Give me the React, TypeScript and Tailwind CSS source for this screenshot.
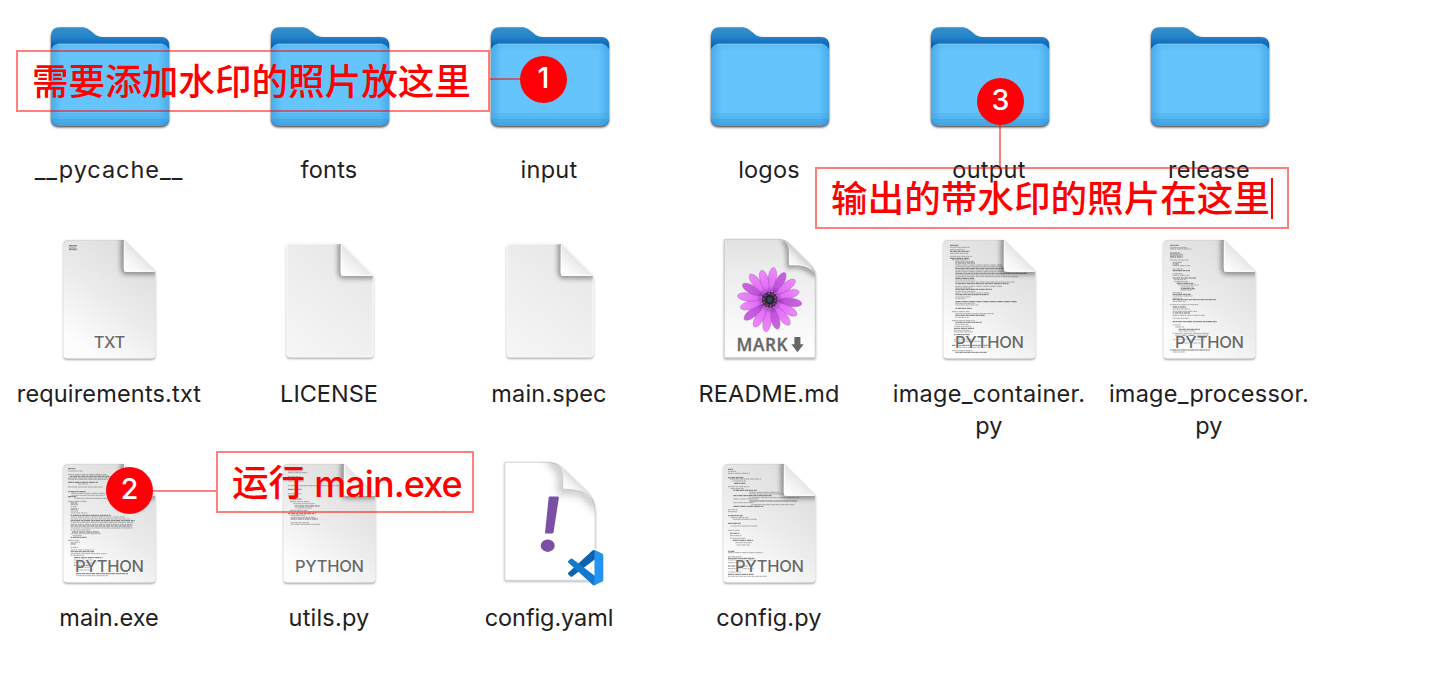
import type { ReactNode } from "react";

type Line = [x: number, y: number, w: number];

/* Miniature source listings, in thirds of a pixel inside the 384-unit icon box. */
const containerCode: Line[] = [
  [72, 28, 25], [72, 34, 58], [72, 41, 44], [72, 46, 60], [72, 52, 54], [72, 61, 66],
  [72, 67, 58], [78, 71, 50], [88, 76, 56], [88, 81, 60], [88, 87, 140], [88, 92, 145], [88, 97, 150], [88, 102, 150],
  [88, 107, 160], [88, 112, 214], [88, 117, 150], [88, 122, 190], [88, 127, 56], [88, 132, 60], [88, 138, 180],
  [88, 143, 160], [88, 151, 140], [88, 156, 50], [88, 160, 110], [88, 166, 62], [88, 171, 105], [88, 176, 100],
  [88, 183, 45], [88, 188, 30], [88, 197, 185], [88, 202, 60], [88, 207, 70], [88, 217, 50],
  [78, 227, 52], [88, 233, 115], [88, 238, 90], [88, 244, 40], [78, 254, 68], [88, 259, 80], [88, 265, 40],
  [84, 271, 52], [84, 277, 60], [84, 283, 50], [84, 288, 56], [84, 296, 48], [84, 310, 60], [84, 316, 90],
  [78, 328, 110], [92, 334, 90], [78, 344, 62], [88, 349, 94],
];
const processorCode: Line[] = [
  [72, 28, 26], [72, 35, 52], [72, 39, 65], [72, 51, 30], [72, 55, 40], [72, 59, 38], [72, 63, 38],
  [72, 72, 55], [80, 79, 30], [80, 84, 18], [80, 89, 52], [80, 99, 32], [80, 104, 52], [80, 113, 30], [80, 118, 50],
  [80, 126, 70], [84, 131, 36], [84, 137, 42], [92, 142, 50], [96, 147, 62], [104, 153, 40], [104, 158, 42],
  [104, 162, 36], [80, 170, 28], [80, 175, 54], [80, 180, 62], [80, 187, 28], [80, 191, 130], [80, 196, 40],
  [72, 206, 85], [80, 213, 40], [80, 219, 52], [80, 226, 74], [80, 231, 52], [80, 238, 96], [80, 247, 50],
  [80, 257, 132], [80, 267, 24], [88, 273, 26], [98, 280, 64], [98, 285, 50], [80, 292, 110], [88, 298, 100],
  [82, 311, 96], [96, 321, 76], [72, 342, 120], [80, 348, 38],
];
const mainCode: Line[] = [
  [66, 26, 22], [66, 33, 44], [66, 44, 116], [72, 49, 130], [66, 54, 130], [66, 58, 120], [66, 67, 90], [96, 72, 32],
  [66, 81, 104], [66, 95, 54], [76, 100, 120], [76, 106, 100], [66, 110, 25], [84, 115, 130], [66, 124, 56],
  [74, 129, 20], [74, 134, 22], [74, 140, 18], [74, 147, 24], [74, 153, 22], [74, 159, 50], [74, 166, 120],
  [74, 171, 164], [74, 177, 180], [74, 182, 192], [74, 187, 188], [74, 193, 186], [74, 198, 184], [74, 204, 185],
  [74, 210, 60], [78, 216, 84], [74, 221, 90], [80, 227, 28], [74, 232, 48], [66, 241, 34], [74, 247, 28],
  [74, 252, 16], [74, 262, 22], [74, 270, 70], [74, 275, 72], [74, 281, 108], [74, 286, 40], [84, 293, 86],
  [84, 300, 56], [84, 308, 68], [84, 316, 46], [90, 322, 40], [90, 330, 50], [90, 341, 156], [90, 347, 95],
];
const utilsCode: Line[] = [
  [66, 28, 34], [66, 33, 40], [66, 38, 58], [66, 51, 38], [66, 63, 48], [66, 77, 224], [66, 88, 40],
  [66, 101, 40], [72, 107, 22], [72, 117, 36], [72, 125, 58], [82, 131, 64], [86, 138, 76], [88, 144, 50], [72, 151, 52],
  [66, 161, 84], [74, 166, 44], [74, 172, 74], [74, 177, 82], [74, 188, 55], [74, 193, 90],
];
const configCode: Line[] = [
  [66, 28, 16], [66, 34, 24], [66, 40, 65], [66, 53, 46], [72, 57, 94], [80, 63, 40], [84, 70, 34],
  [66, 80, 64], [74, 86, 40], [82, 91, 70], [130, 97, 90], [130, 102, 100], [82, 107, 115], [130, 113, 150],
  [82, 117, 74], [130, 123, 145], [82, 128, 62], [136, 134, 130], [82, 139, 90], [66, 149, 28], [66, 155, 30],
  [66, 167, 44], [74, 173, 52], [82, 178, 72], [66, 190, 38], [74, 198, 80], [66, 211, 36], [72, 220, 28],
  [72, 227, 34], [72, 235, 46], [80, 241, 62], [88, 248, 50], [92, 255, 40], [66, 274, 20], [66, 278, 106],
  [66, 290, 40], [66, 295, 80], [66, 300, 90], [66, 308, 46], [66, 318, 60], [66, 326, 78], [66, 336, 40],
  [66, 343, 78], [66, 349, 116],
];
const txtCode: Line[] = [
  [69, 29, 24], [69, 33, 22], [69, 37, 24], [69, 41, 25],
];

const dashes = ["9 1 5 1 12 2", "5 2 11 1 7 1", "14 1 4 2", "7 1 3 1 10 2"];

function Frame({ children }: { children: ReactNode }) {
  return (
    <svg viewBox="0 0 128 128" className="h-32 w-32 shrink-0 overflow-visible">
      {children}
    </svg>
  );
}

function Folder() {
  return (
    <Frame>
      <path filter="url(#folderShadow)" fill="url(#folderBack)" d="M5 27V24Q5 15.3 14 15.3H35C41 15.3 43.5 18 47.5 21.3C50.5 23.8 52.5 25 57 25H115Q123 25 123 33V106Q123 114 115 114H13Q5 114 5 106Z" />
      <rect x="5" y="31.7" width="118" height="82.3" rx="8" fill="url(#folderFront)" />
      <rect x="5" y="31.7" width="118" height="82.3" rx="8" fill="url(#folderSides)" />
      <path d="M11 32.3H117" stroke="#7acbfa" strokeWidth="1" />
      <path d="M5.2 102H123M5.2 104.8H123" stroke="#4dabe4" strokeWidth=".8" />
      <path d="M5.2 107.8H123" stroke="#3b9ddc" strokeWidth=".9" />
    </Frame>
  );
}

function Code({ lines }: { lines: Line[] }) {
  return (
    <g transform="scale(.33333)" stroke="#4d4d4d">
      {lines.map(([x, y, w], i) => (
        <path key={i} d={`M${x} ${y}h${w}`} strokeWidth={i % 3 ? 2.2 : 3} opacity={i % 3 ? 0.6 : 0.75} strokeDasharray={dashes[i % 4]} />
      ))}
    </g>
  );
}

function Doc({ kind, code }: { kind: string; code: Line[] }) {
  return (
    <Frame>
      <path filter="url(#docShadow)" fill="url(#paper)" d="M17.7 7.5Q17.7 4 21 4H78.5L109.2 35V119Q109.2 122.3 106 122.3H21Q17.7 122.3 17.7 119Z" />
      <path d="M18 8Q18 4.4 21 4.4H78" fill="none" stroke="#d2d2d2" strokeWidth=".7" />
      <Code lines={code} />
      <g clipPath="url(#docClip)">
        <path d="M78 2V32Q78 35.5 81 35.5H111" fill="none" stroke="#000" strokeOpacity=".42" strokeWidth="6" filter="url(#soft)" />
      </g>
      <path d="M78 4L109.2 35.7H81Q77.8 35.7 77.8 32.5Z" fill="url(#fold)" />
      <path d="M78.3 5V32.5Q78.3 35.2 81 35.2H108" fill="none" stroke="#fff" strokeWidth="1" />
      <text x="63.5" y="112.3" textAnchor="middle" textLength={kind === "TXT" ? 31.5 : 69} fontFamily="Inter, sans-serif" fontSize="16.5" fontWeight="500" fill="#6a6a6a" stroke="#fff" strokeOpacity=".65" strokeWidth="1.6" paintOrder="stroke">
        {kind}
      </text>
    </Frame>
  );
}

function BlankDoc() {
  return (
    <Frame>
      <path filter="url(#docShadow)" fill="url(#blankPaper)" stroke="#fff" strokeWidth=".9" d="M21.2 10Q21.2 7.9 23.3 7.9H75.5L106.8 39.5V118.5Q106.8 120.8 104.8 120.8H23.3Q21.2 120.8 21.2 118.5Z" />
      <g clipPath="url(#blankClip)">
        <path d="M75 6V36Q75 39.6 78 39.6H109" fill="none" stroke="#000" strokeOpacity=".4" strokeWidth="6" filter="url(#soft)" />
      </g>
      <path d="M75 7.9L106.8 39.7H78Q74.7 39.7 74.7 36.5Z" fill="url(#fold)" />
      <path d="M75.2 9V36.5Q75.2 39.2 78 39.2H106" fill="none" stroke="#fff" strokeWidth="1" />
    </Frame>
  );
}

function MarkdownDoc() {
  return (
    <Frame>
      <path filter="url(#docShadow)" fill="url(#mdPaper)" stroke="#b9b9b9" strokeWidth=".6" d="M18.3 3.3H72C78 3.3 81 5.5 84.5 9L104 28.5C107.5 32 109.2 35 109.2 40V121.7H18.3Z" />
      <g clipPath="url(#mdClip)">
        <path d="M77 3C83 7 83.5 17 83 30C93 28 104 32 110 40" fill="none" stroke="#000" strokeOpacity=".45" strokeWidth="4" filter="url(#soft)" />
      </g>
      <path d="M74 3.6C81 5 83.3 11 83.3 18V29H91C98 29 105 31.5 108.5 37C107.5 33 106 30.5 104 28.5L84.5 9C81 5.5 78 4 74 3.6Z" fill="url(#curl)" />
      <path d="M83.5 14V28.8H91C96 28.8 101 30 105 33" fill="none" stroke="#fff" strokeWidth=".8" />
      <g transform="translate(63.7 63.7)">
        {Array.from({ length: 16 }, (_, i) => (
          <path
            key={i}
            transform={`rotate(${i * 22.5 + 7}) scale(1 ${[1, 0.96, 0.99, 0.94][i % 4]})`}
            d="M0-5C-2.6-11-4.6-19-3.9-25C-3.4-29.8-1.4-32.4 0-32.4S3.4-29.8 3.9-25C4.6-19 2.6-11 0-5Z"
            fill={i % 3 === 1 ? "url(#petalB)" : "url(#petalA)"}
            stroke="#9c45b0"
            strokeWidth=".4"
          />
        ))}
        <circle r="7.8" fill="#35103f" opacity=".8" />
        <circle r="6.3" fill="none" stroke="#d3a22e" strokeWidth="1" strokeDasharray="1.1 2.85" />
        <circle r="4.6" fill="#172331" />
        <circle r="2.6" fill="#344656" />
      </g>
      <text x="30.5" y="114.7" textLength="51" fontFamily="'Open Sans', sans-serif" fontSize="17.2" fontWeight="600" fill="#666" stroke="#666" strokeWidth=".3">MARK</text>
      <path d="M88.4 101H94.4V108.3H97.6L91.5 116.3L85.4 108.3H88.4Z" fill="#666" />
    </Frame>
  );
}

function YamlDoc() {
  return (
    <Frame>
      <path filter="url(#softDocShadow)" fill="#fff" stroke="#c9c9c9" strokeWidth=".8" d="M18.8 2.3H61C69 2.3 73 4.5 78 9.5L99.5 30C106 36.5 109.2 43 109.2 53V120.3H18.8Z" />
      <g clipPath="url(#yamlClip)">
        <path d="M62 0C74 3 78 15 76.5 30C90 27.5 105 34 112 50" fill="none" stroke="#000" strokeOpacity=".26" strokeWidth="8" filter="url(#wideSoft)" />
      </g>
      <path d="M68 3.4C75 6.5 76.7 12 76.7 19V29.3C86 29 97 30 106 39C104 35 102 32.3 99.5 30L78 9.5C75 6.5 72 4.5 68 3.4Z" fill="url(#curlLight)" />
      <path d="M72 5.5C76 9 76.7 14 76.7 19V29.3C86 29 96 30.5 103 35.5" fill="none" stroke="#bdbdbd" strokeWidth=".6" />
      <path d="M62.6 38Q62.7 36.6 64 36.6H71.5Q73 36.6 72.8 38.2L67.6 72Q67.3 73.5 65.8 73.5H59Z" fill="#7b4fa3" />
      <ellipse cx="61.7" cy="85.7" rx="7" ry="6.2" fill="#7b4fa3" />
      <g transform="translate(82 90) scale(.353)" stroke="#fff" strokeWidth="8" paintOrder="stroke" strokeLinejoin="round">
        <path d="M100 14L75 0L42 30L12 25L0 35L16 50L0 65L12 76L42 70L75 100L100 88Z" fill="#fff" />
      </g>
      <g transform="translate(82 90) scale(.353)">
        <path fill="#0b63b0" d="M96.461 10.796L75.857.876a6.23 6.23 0 0 0-7.107 1.207L1.3 63.583a4.167 4.167 0 0 0 .004 6.162l5.51 5.009a4.167 4.167 0 0 0 5.32.237l81.228-61.62c2.725-2.067 6.639-.124 6.639 3.297v-.24a6.25 6.25 0 0 0-3.54-5.632z" />
        <path fill="#1279cc" d="M96.461 89.204l-20.604 9.92a6.229 6.229 0 0 1-7.107-1.207L1.3 36.417a4.167 4.167 0 0 1 .004-6.162l5.51-5.009a4.167 4.167 0 0 1 5.32-.237l81.228 61.62c2.725 2.067 6.639.124 6.639-3.297v.24a6.25 6.25 0 0 1-3.54 5.632z" />
        <path fill="#2594ee" d="M75.858 99.126a6.232 6.232 0 0 1-7.108-1.21c2.306 2.307 6.25.674 6.25-2.588V4.672c0-3.262-3.944-4.895-6.25-2.589a6.232 6.232 0 0 1 7.108-1.21l20.6 9.908A6.25 6.25 0 0 1 100 16.413v67.174a6.25 6.25 0 0 1-3.541 5.633z" />
      </g>
    </Frame>
  );
}

function Defs() {
  return (
    <svg className="absolute h-0 w-0" aria-hidden="true">
      <defs>
        <filter id="folderShadow" x="-10%" y="-10%" width="120%" height="125%">
          <feDropShadow dx="0" dy="1.3" stdDeviation="1" floodColor="#000" floodOpacity=".75" />
        </filter>
        <filter id="docShadow" x="-10%" y="-10%" width="120%" height="125%">
          <feDropShadow dx="0" dy="1.3" stdDeviation="1" floodColor="#000" floodOpacity=".45" />
        </filter>
        <filter id="softDocShadow" x="-10%" y="-10%" width="120%" height="125%">
          <feDropShadow dx="0" dy="1" stdDeviation=".8" floodColor="#000" floodOpacity=".3" />
        </filter>
        <filter id="soft" x="-30%" y="-30%" width="160%" height="160%"><feGaussianBlur stdDeviation="2.4" /></filter>
        <filter id="wideSoft" x="-30%" y="-30%" width="160%" height="160%"><feGaussianBlur stdDeviation="4" /></filter>
        <clipPath id="docClip"><path d="M17.7 4H78V35.7H109.2V122.3H17.7Z" /></clipPath>
        <clipPath id="blankClip"><path d="M21 7.9H75V39.7H107V121H21Z" /></clipPath>
        <clipPath id="mdClip"><path d="M18.3 3.3H72C78 3.3 81 5.5 84.5 9L104 28.5C107.5 32 109.2 35 109.2 40V121.7H18.3Z" /></clipPath>
        <clipPath id="yamlClip"><path d="M18.8 2.3H61C69 2.3 73 4.5 78 9.5L99.5 30C106 36.5 109.2 43 109.2 53V120.3H18.8Z" /></clipPath>
        <linearGradient id="folderBack" gradientUnits="userSpaceOnUse" x1="0" y1="15" x2="0" y2="34">
          <stop offset="0" stopColor="#378fcc" /><stop offset=".5" stopColor="#2585c9" /><stop offset="1" stopColor="#0963b8" />
        </linearGradient>
        <linearGradient id="folderFront" x1="0" y1="0" x2="0" y2="1">
          <stop offset="0" stopColor="#5cbbf3" /><stop offset=".1" stopColor="#64c4fb" /><stop offset=".84" stopColor="#64c4fb" />
          <stop offset=".93" stopColor="#54b6f0" /><stop offset=".94" stopColor="#49aae8" /><stop offset="1" stopColor="#41a2e0" />
        </linearGradient>
        <linearGradient id="folderSides">
          <stop offset="0" stopColor="#2f94d8" stopOpacity=".5" /><stop offset=".09" stopColor="#2f94d8" stopOpacity="0" />
          <stop offset=".91" stopColor="#2f94d8" stopOpacity="0" /><stop offset="1" stopColor="#2f94d8" stopOpacity=".5" />
        </linearGradient>
        <linearGradient id="paper" x1=".75" y1=".1" x2=".25" y2=".95">
          <stop offset="0" stopColor="#dedede" /><stop offset=".5" stopColor="#ececec" /><stop offset="1" stopColor="#fdfdfd" />
        </linearGradient>
        <linearGradient id="blankPaper" x1=".8" y1="0" x2=".2" y2="1">
          <stop offset="0" stopColor="#e6e6e6" /><stop offset=".5" stopColor="#eeeeee" /><stop offset="1" stopColor="#f5f5f5" />
        </linearGradient>
        <linearGradient id="mdPaper" x1="0" y1="0" x2="0" y2="1">
          <stop offset="0" stopColor="#e2e2e2" /><stop offset=".25" stopColor="#ececec" /><stop offset="1" stopColor="#fff" />
        </linearGradient>
        <linearGradient id="fold" x1=".75" y1=".25" x2=".1" y2="1">
          <stop offset="0" stopColor="#d6d6d6" /><stop offset=".6" stopColor="#f3f3f3" /><stop offset="1" stopColor="#fff" />
        </linearGradient>
        <linearGradient id="curl" x1=".65" y1=".4" x2=".25" y2=".8">
          <stop offset="0" stopColor="#c4c4c4" /><stop offset=".5" stopColor="#f0f0f0" /><stop offset="1" stopColor="#fff" />
        </linearGradient>
        <linearGradient id="curlLight" x1=".6" y1=".45" x2=".25" y2=".8">
          <stop offset="0" stopColor="#dcdcdc" /><stop offset=".5" stopColor="#f8f8f8" /><stop offset="1" stopColor="#fff" />
        </linearGradient>
        <linearGradient id="petalA" x1="0" y1="1" x2="0" y2="0">
          <stop offset="0" stopColor="#8a2aa5" /><stop offset=".3" stopColor="#e06cf6" /><stop offset="1" stopColor="#f08cfb" />
        </linearGradient>
        <linearGradient id="petalB" x1="0" y1="1" x2="0" y2="0">
          <stop offset="0" stopColor="#7b2096" /><stop offset=".35" stopColor="#bf52da" /><stop offset="1" stopColor="#cc66e0" />
        </linearGradient>
      </defs>
    </svg>
  );
}

type Item = { name: string[]; tracking: string; icon: ReactNode };

const items: Item[] = [
  { name: ["__pycache__"], tracking: "tracking-[0.95px]", icon: <Folder /> },
  { name: ["fonts"], tracking: "tracking-[0.2px]", icon: <Folder /> },
  { name: ["input"], tracking: "tracking-[0.3px]", icon: <Folder /> },
  { name: ["logos"], tracking: "tracking-[0.2px]", icon: <Folder /> },
  { name: ["output"], tracking: "tracking-[0.3px]", icon: <Folder /> },
  { name: ["release"], tracking: "tracking-[0.1px]", icon: <Folder /> },
  { name: ["requirements.txt"], tracking: "tracking-[0.17px]", icon: <Doc kind="TXT" code={txtCode} /> },
  { name: ["LICENSE"], tracking: "tracking-normal", icon: <BlankDoc /> },
  { name: ["main.spec"], tracking: "tracking-[0.15px]", icon: <BlankDoc /> },
  { name: ["README.md"], tracking: "tracking-[0.15px]", icon: <MarkdownDoc /> },
  { name: ["image_container.", "py"], tracking: "tracking-[0.28px]", icon: <Doc kind="PYTHON" code={containerCode} /> },
  { name: ["image_processor.", "py"], tracking: "tracking-[0.25px]", icon: <Doc kind="PYTHON" code={processorCode} /> },
  { name: ["main.exe"], tracking: "tracking-normal", icon: <Doc kind="PYTHON" code={mainCode} /> },
  { name: ["utils.py"], tracking: "tracking-[0.2px]", icon: <Doc kind="PYTHON" code={utilsCode} /> },
  { name: ["config.yaml"], tracking: "tracking-[-0.1px]", icon: <YamlDoc /> },
  { name: ["config.py"], tracking: "tracking-[0.15px]", icon: <Doc kind="PYTHON" code={configCode} /> },
];

function Note({ place, children }: { place: string; children: ReactNode }) {
  return (
    <div className={`absolute flex h-[62px] items-center border-2 border-[#ff0000]/50 pt-[3px] pl-3.5 text-[36.6px] leading-none font-medium whitespace-nowrap text-[#ff0000] ${place}`}>
      {children}
    </div>
  );
}

function Badge({ place, children }: { place: string; children: ReactNode }) {
  return (
    <div className={`absolute flex h-[47px] w-[47px] items-center justify-center rounded-full bg-[#ff0008] pb-[3px] text-[28.5px] leading-none font-medium text-white ${place}`}>
      {children}
    </div>
  );
}

export default function App() {
  return (
    <main className="relative h-[676px] w-[1438px] overflow-hidden bg-white font-['Inter','Noto_Sans_CJK_SC',sans-serif] text-[#1f2021]">
      <Defs />
      <div className="grid auto-rows-[224px] grid-cols-[repeat(6,220px)] pt-3">
        {items.map((item) => (
          <div key={item.name[0]} className="flex flex-col items-center">
            {item.icon}
            <div className={`mt-3.5 mr-[2px] flex flex-col items-center text-[23.5px] leading-8 whitespace-nowrap ${item.tracking}`}>
              {item.name.map((part) => (
                <span key={part}>{part}</span>
              ))}
            </div>
          </div>
        ))}
      </div>

      <Note place="left-4 top-[50px] w-[474px]">需要添加水印的照片放这里</Note>
      <div className="absolute top-[78px] left-[490px] h-[2px] w-[31px] bg-[#ff0000]/50" />
      <Badge place="left-[520px] top-[56px]">1</Badge>

      <Note place="left-[216px] top-[451px] w-[258px]">
        运行
        <span className="ml-[9px] text-[36px] tracking-[-0.9px]">main.exe</span>
      </Note>
      <div className="absolute top-[490px] left-[152px] h-[2px] w-[64px] bg-[#ff0000]/50" />
      <Badge place="left-[106px] top-[467px]">2</Badge>

      <Note place="left-[815px] top-[167px] w-[474px]">
        输出的带水印的照片在这里
        <span className="-mt-[3px] ml-px h-[41px] w-[2px] bg-[#ff0000]" />
      </Note>
      <div className="absolute top-[125px] left-[999px] h-[42px] w-[2px] bg-[#ff0000]/50" />
      <Badge place="left-[977px] top-[78px]">3</Badge>
    </main>
  );
}
